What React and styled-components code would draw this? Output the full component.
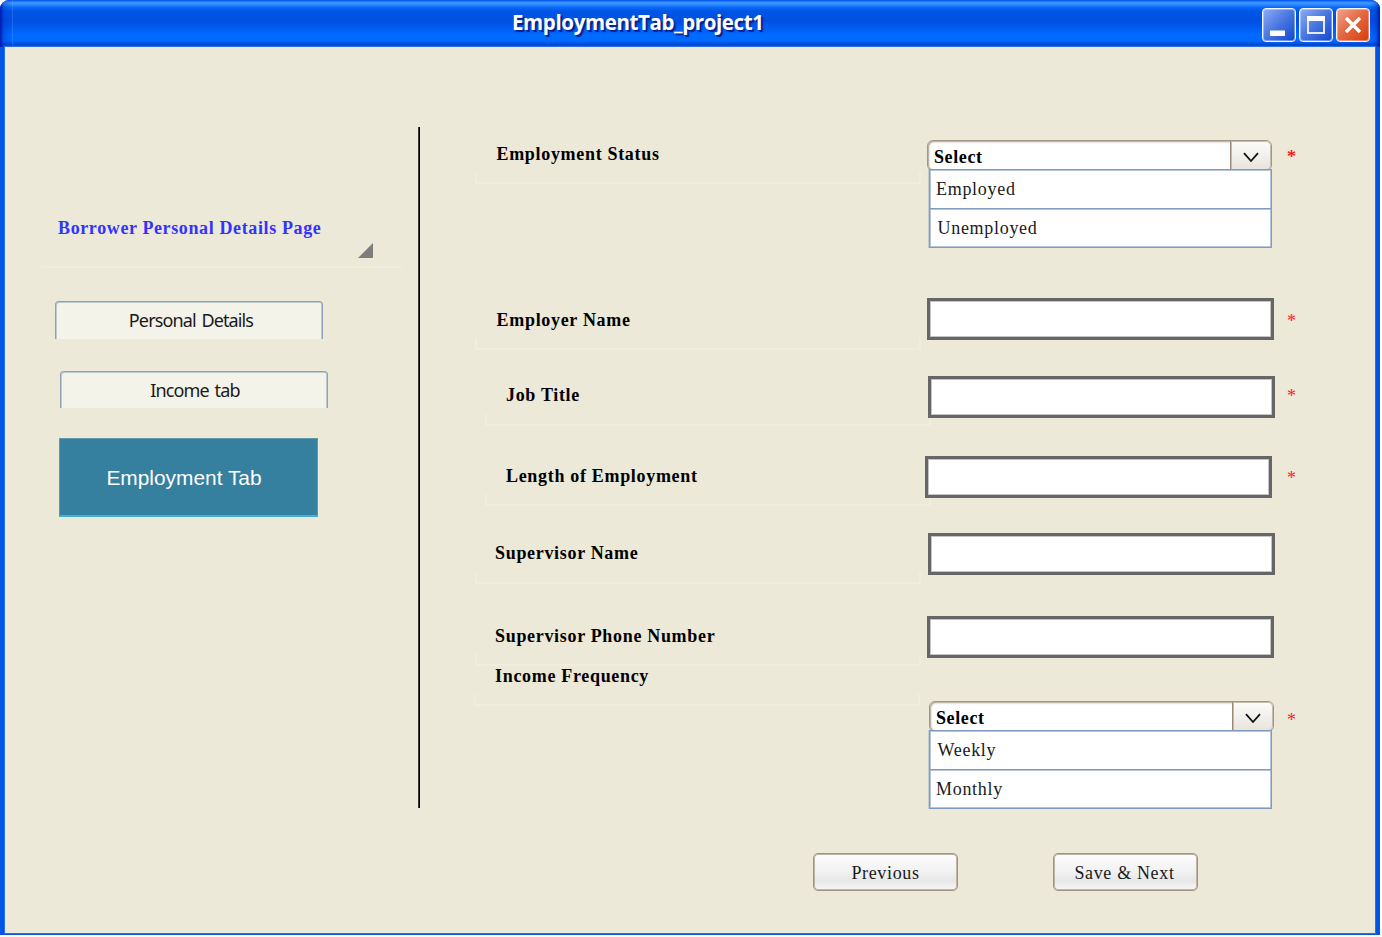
import React from "react";
import styled, { createGlobalStyle, css } from "styled-components";

const serif = '"Liberation Serif", "Times New Roman", serif';

const GlobalStyle = createGlobalStyle`
  * { box-sizing: border-box; }
  body { margin: 0; background: #fff; font-family: ${serif}; }
`;

const Window = styled.div`
  width: 1380px;
  height: 935px;
  display: flex;
  flex-direction: column;
  border-radius: 9px 9px 0 0;
  overflow: hidden;
  background: #0055e5;
`;

const TitleBar = styled.header`
  height: 47px;
  flex: none;
  display: flex;
  align-items: flex-start;
  justify-content: flex-end;
  gap: 3px;
  padding: 8px 10px 0 0;
  background:
    linear-gradient(90deg, rgba(0, 20, 170, 0.9) 0, rgba(0, 50, 200, 0.35) 4px, transparent 12px, rgba(90, 160, 255, 0.3) 12px, rgba(90, 160, 255, 0.3) 13px, transparent 13px, transparent calc(100% - 10px), rgba(0, 50, 200, 0.35) calc(100% - 4px), rgba(0, 20, 170, 0.9) 100%),
    linear-gradient(180deg, #0a5ff0 0, #0a5ff0 1px, #3a92ff 2px, #3a92ff 4px, #0c6cfb 7px, #0055e5 11px, #0050e0 21px, #005cf2 28px, #006bff 35px, #0069ff 41px, #0057ea 43px, #0042c8 45px, #2d68d8 47px);
`;

const Title = styled.h1`
  flex: 1;
  margin: 0;
  padding-left: 512px;
  font: bold 20.5px/28px "Open Sans", "Noto Sans", sans-serif;
  letter-spacing: -0.38px;
  white-space: nowrap;
  color: #fff;
  text-shadow: 2px 2px 1px #0b1f8c;
`;

const WindowButton = styled.button`
  width: 34px;
  height: 34px;
  padding: 0;
  border: 1px solid #f4f7ff;
  border-radius: 4px;
  display: flex;
  align-items: center;
  justify-content: center;
  box-shadow: inset 0 0 0 1px rgba(255, 255, 255, 0.35);
  background: ${(p) =>
    p.$close
      ? "linear-gradient(135deg, #f0a48f 0%, #e2683f 48%, #d93c07 100%)"
      : "linear-gradient(135deg, #8fadf5 0%, #4a77e2 48%, #1046cf 100%)"};
`;

const Body = styled.main`
  flex: 1;
  margin: 0 5px 2px;
  display: flex;
  background: #ece9d8;
  box-shadow: 0 0 0 1px #2d6fe6;
`;

const Sidebar = styled.nav`
  width: 413px;
  padding: 168px 0 0 36px;
  display: flex;
  flex-direction: column;
  align-items: flex-start;
`;

const Heading = styled.div`
  width: 361px;
  height: 53px;
  padding: 3px 0 0 17px;
  border-bottom: 2px solid #f0eddf;
  font: bold 18px/20px ${serif};
  letter-spacing: 0.62px;
  color: #33f;
  svg { display: block; margin: 5px 0 0 300px; }
`;

const Tab = styled.button`
  width: 268px;
  height: ${(p) => p.$h}px;
  margin: ${(p) => p.$top}px 0 0 ${(p) => p.$left}px;
  padding: 0 0 1px ${(p) => p.$shift || 4}px;
  border: 1px solid #8ca3b1;
  border-bottom: 0;
  border-radius: 4px 4px 0 0;
  box-shadow: inset 1px 1px 0 #bccad0, inset -1px 0 0 #bccad0;
  background: #f4f3e9;
  font: 18px/36px "Noto Sans", sans-serif;
  letter-spacing: -0.88px;
  word-spacing: 2px;
  color: #1a1a1a;
`;

const ActiveTab = styled.button`
  width: 259px;
  height: 79px;
  margin: 30px 0 0 18px;
  padding: 2px 9px 0 0;
  border: 1px solid #5f9aa8;
  border-bottom: 2px solid #3db0e2;
  background: #35809e;
  font: 20.9px/74px "Liberation Sans", Arial, sans-serif;
  color: #fff;
`;

const Divider = styled.div`
  width: 2px;
  height: 681px;
  margin-top: 80px;
  background: linear-gradient(90deg, #3a3a37 50%, #000 50%);
`;

const Form = styled.form`
  flex: 1;
  padding-top: 80px;
`;

const Row = styled.div`
  height: ${(p) => p.$h}px;
  display: flex;
  align-items: flex-start;
`;

const LabelCell = styled.div`
  width: 505px;
  flex: none;
  padding: ${(p) => p.$top}px 0 0 ${(p) => p.$left}px;
`;

const Label = styled.label`
  display: block;
  position: relative;
  width: 446px;
  height: 45px;
  padding: ${(p) => p.$pad || 5}px 0 0 ${(p) => p.$indent}px;
  font: bold 18px/20px ${serif};
  letter-spacing: 0.68px;
  color: #000;
  &::after {
    content: "";
    position: absolute;
    left: 0;
    right: 0;
    bottom: 0;
    height: 10px;
    border: 2px solid #f0eddf;
    border-top: 0;
  }
`;

const ControlCell = styled.div`
  width: 362px;
  flex: none;
  position: relative;
  padding: ${(p) => p.$top}px 0 0 ${(p) => p.$left}px;
`;

const Input = styled.input`
  display: block;
  width: 347px;
  height: 42px;
  border: 3px solid #666;
  padding: 0 8px;
  background: #fff;
  box-shadow: inset 0 0 0 1px #c4c4c4;
  outline: none;
  font: 18px ${serif};
`;

const Star = styled.span`
  margin-top: ${(p) => p.$top}px;
  font: 18px/20px ${serif};
  color: ${(p) => (p.$strong ? "#f00" : "#ff2020")};
  -webkit-text-stroke: ${(p) => (p.$strong ? "0.2px #f00" : "0")};
`;

const SelectBox = styled.div`
  width: 345px;
  height: 31px;
  display: flex;
  overflow: hidden;
  border: 1px solid #a39684;
  border-radius: 6px;
  background: #fff;
  box-shadow: inset 0 0 0 1px #bdb5a8, inset 1px 1px 2px #aaa;
`;

const SelectValue = styled.div`
  flex: 1;
  padding: 6px 0 0 6px;
  font: bold 18px/20px ${serif};
  letter-spacing: 0.6px;
  color: #000;
`;

const SelectArrow = styled.div`
  width: 41px;
  display: flex;
  align-items: center;
  justify-content: center;
  padding-top: 3px;
  border-left: 1px solid #988a77;
  box-shadow: inset 0 0 0 1px #c4bcb0;
  border-radius: 0 5px 5px 0;
  background: linear-gradient(#fcfcfa, #e8e4dc);
`;

const Options = styled.ul`
  width: 343px;
  margin: -2px 0 0 ${(p) => p.$left}px;
  padding: 0;
  position: relative;
  list-style: none;
  border: 1px solid #7f9cbf;
  background: #fff;
  box-shadow: -1px 0 0 #c5ced1, inset 0 0 0 1px #b5c4d8;
`;

const Option = styled.li`
  height: ${(p) => (p.$last ? 38 : 39)}px;
  padding: 9px 0 0 ${(p) => p.$indent}px;
  font: 18px/20px ${serif};
  letter-spacing: 0.7px;
  color: #1a1a1a;
  ${(p) => !p.$last && css`
    border-bottom: 1px solid #7f9cbf;
    box-shadow: 0 1px 0 #b5c4d8;
  `}
`;

const Actions = styled.div`
  display: flex;
  gap: 95px;
  padding: 41px 0 0 393px;
`;

const ActionButton = styled.button`
  width: 145px;
  height: 38px;
  padding: 2px ${(p) => p.$shift || 0}px 0 0;
  border: 1px solid #a09380;
  border-radius: 5px;
  box-shadow: inset 0 0 0 1px #bdb5a8;
  background: linear-gradient(#fdfdfd 0%, #f1f1f1 50%, #e7e7e7 75%, #f8f8f8 100%);
  font: 18px/20px ${serif};
  letter-spacing: 0.65px;
  color: #1a1a1a;
`;

function Select({ left, items }) {
  return (
    <>
      <SelectBox>
        <SelectValue>Select</SelectValue>
        <SelectArrow>
          <svg width="16" height="11" viewBox="0 0 16 11" fill="none" stroke="#111" strokeWidth="1.8">
            <path d="M1 1.2 8 9 15 1.2" />
          </svg>
        </SelectArrow>
      </SelectBox>
      <Options $left={left}>
        {items.map(([text, indent], i) => (
          <Option key={text} $indent={indent} $last={i === items.length - 1}>{text}</Option>
        ))}
      </Options>
    </>
  );
}

const rows = [
  { h: 160, label: "Employment Status", lt: 12, ll: 55, indent: 21.5, ct: 13, cl: 2, star: 20, strong: true, optionsLeft: 2, items: [["Employed", 6], ["Unemployed", 7.5]] },
  { h: 78, label: "Employer Name", lt: 18, ll: 55, indent: 21.6, ct: 11, cl: 2, star: 24 },
  { h: 81, label: "Job Title", lt: 16, ll: 65, indent: 21, pad: 4, ct: 11, cl: 3, star: 21 },
  { h: 78, label: "Length of Employment", lt: 15, ll: 65, indent: 21, ct: 10, cl: 0, star: 22 },
  { h: 82, label: "Supervisor Name", lt: 15, ll: 55, indent: 20, pad: 4, ct: 9, cl: 3 },
  { h: 55, label: "Supervisor Phone Number", lt: 15, ll: 55, indent: 20, ct: 10, cl: 2 },
  { h: 151, label: "Income Frequency", lt: 0, ll: 54, indent: 21, ct: 40, cl: 4, star: 49, optionsLeft: 0, items: [["Weekly", 7.5], ["Monthly", 6]] },
];

export default function App() {
  return (
    <>
      <GlobalStyle />
      <Window>
        <TitleBar>
          <Title>EmploymentTab_project1</Title>
          <WindowButton aria-label="Minimize">
            <svg width="30" height="30"><rect x="6" y="20.5" width="15" height="5.5" fill="#fff" /></svg>
          </WindowButton>
          <WindowButton aria-label="Maximize">
            <svg width="30" height="30">
              <rect x="7" y="7" width="16" height="16" fill="none" stroke="#e4ebfc" strokeWidth="2" />
              <rect x="6" y="6" width="18" height="5" fill="#fff" />
            </svg>
          </WindowButton>
          <WindowButton aria-label="Close" $close>
            <svg width="30" height="30"><path d="M8 8 22 22M22 8 8 22" stroke="#fff" strokeWidth="3.4" /></svg>
          </WindowButton>
        </TitleBar>
        <Body>
          <Sidebar>
            <Heading>
              Borrower Personal Details Page
              <svg width="15" height="15"><path d="M0 15 15 0V15Z" fill="#7d7d7d" /></svg>
            </Heading>
            <Tab $top={33} $left={14} $h={38}>Personal Details</Tab>
            <Tab $top={32} $left={19} $shift={2} $h={37}>Income tab</Tab>
            <ActiveTab>Employment Tab</ActiveTab>
          </Sidebar>
          <Divider />
          <Form>
            {rows.map((r) => (
              <Row key={r.label} $h={r.h}>
                <LabelCell $top={r.lt} $left={r.ll}>
                  <Label $indent={r.indent} $pad={r.pad}>{r.label}</Label>
                </LabelCell>
                <ControlCell $top={r.ct} $left={r.cl}>
                  {r.items ? <Select left={r.optionsLeft} items={r.items} /> : <Input aria-label={r.label} />}
                </ControlCell>
                {r.star && <Star $top={r.star} $strong={r.strong}>*</Star>}
              </Row>
            ))}
            <Actions>
              <ActionButton type="button">Previous</ActionButton>
              <ActionButton type="button" $shift={2}>Save &amp; Next</ActionButton>
            </Actions>
          </Form>
        </Body>
      </Window>
    </>
  );
}
